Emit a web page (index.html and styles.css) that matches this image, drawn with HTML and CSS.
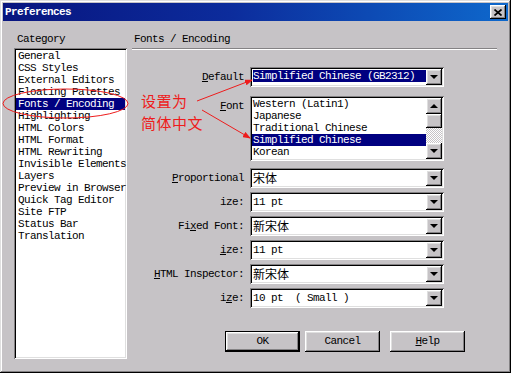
FILE: index.html
```html
<!DOCTYPE html>
<html>
<head>
  <title>Preferences</title>
  <link rel="stylesheet" href="styles.css">
</head>
<body>
  <div class="window">
    <div class="titlebar">
      <span class="title">Preferences</span>
      <span class="close raised">
        <svg width="8" height="7" viewBox="0 0 8 7"><path d="M0.5 0.5L7.5 6.5M7.5 0.5L0.5 6.5" stroke="#000" stroke-width="1.7"/></svg>
      </span>
    </div>

    <div class="main">
      <div class="category">
        <div class="caption">Category</div>
        <div class="list sunken">
          <div class="item">General</div>
          <div class="item">CSS Styles</div>
          <div class="item">External Editors</div>
          <div class="item">Floating Palettes</div>
          <div class="item selected">Fonts / Encoding</div>
          <div class="item">Highlighting</div>
          <div class="item">HTML Colors</div>
          <div class="item">HTML Format</div>
          <div class="item">HTML Rewriting</div>
          <div class="item">Invisible Elements</div>
          <div class="item">Layers</div>
          <div class="item">Preview in Browser</div>
          <div class="item">Quick Tag Editor</div>
          <div class="item">Site FTP</div>
          <div class="item">Status Bar</div>
          <div class="item">Translation</div>
        </div>
      </div>

      <div class="panel">
        <div class="heading">Fonts / Encoding</div>
        <div class="rule"></div>

        <div class="form">
          <div class="row">
            <div class="label"><span><u>D</u>efault</span></div>
            <div class="select sunken">
              <span class="value"><span class="picked">Simplified Chinese (GB2312)</span></span>
              <span class="drop raised"></span>
            </div>
          </div>

          <div class="row tall">
            <div class="label"><span><u>F</u>ont</span></div>
            <div class="listbox sunken">
              <div class="options">
                <div class="opt">Western (Latin1)</div>
                <div class="opt">Japanese</div>
                <div class="opt">Traditional Chinese</div>
                <div class="opt selected">Simplified Chinese</div>
                <div class="opt">Korean</div>
              </div>
              <div class="scrollbar">
                <span class="arrow up raised"></span>
                <span class="thumb raised"></span>
                <span class="track"></span>
                <span class="arrow down raised"></span>
              </div>
            </div>
          </div>

          <div class="row after-tall">
            <div class="label"><span><u>P</u>roportional</span></div>
            <div class="select sunken">
              <span class="value"><span class="cjk">宋体</span></span>
              <span class="drop raised"></span>
            </div>
          </div>

          <div class="row">
            <div class="label"><span>ize:</span></div>
            <div class="select sunken">
              <span class="value">11 pt</span>
              <span class="drop raised"></span>
            </div>
          </div>

          <div class="row">
            <div class="label"><span>Fi<u>x</u>ed Font:</span></div>
            <div class="select sunken">
              <span class="value"><span class="cjk">新宋体</span></span>
              <span class="drop raised"></span>
            </div>
          </div>

          <div class="row">
            <div class="label"><span><u>i</u>ze:</span></div>
            <div class="select sunken">
              <span class="value">11 pt</span>
              <span class="drop raised"></span>
            </div>
          </div>

          <div class="row">
            <div class="label"><span><u>H</u>TML Inspector:</span></div>
            <div class="select sunken">
              <span class="value"><span class="cjk">新宋体</span></span>
              <span class="drop raised"></span>
            </div>
          </div>

          <div class="row">
            <div class="label"><span>i<u>z</u>e:</span></div>
            <div class="select sunken">
              <span class="value">10 pt  ( Small )</span>
              <span class="drop raised"></span>
            </div>
          </div>
        </div>

        <div class="buttons">
          <span class="btn raised default">OK</span>
          <span class="btn raised cancel">Cancel</span>
          <span class="btn raised help"><u>H</u>elp</span>
        </div>
      </div>
    </div>

    <!-- red hand-drawn notes on top of the dialog -->
    <svg class="marks" width="511" height="373">
      <defs>
        <marker id="head" markerWidth="8" markerHeight="6" refX="7" refY="3" orient="auto" markerUnits="userSpaceOnUse">
          <path d="M0 0L8 3L0 6z" fill="#ee1c1c"/>
        </marker>
      </defs>
      <ellipse cx="65.5" cy="103.5" rx="62.5" ry="14.5" fill="none" stroke="#ee1c1c"/>
      <line x1="197" y1="101" x2="252" y2="80" stroke="#ee1c1c" marker-end="url(#head)"/>
      <line x1="202" y1="110" x2="250" y2="138" stroke="#ee1c1c" marker-end="url(#head)"/>
    </svg>
    <div class="note">设置为<br>简体中文</div>
  </div>
</body>
</html>
```

FILE: styles.css
```css
* { box-sizing: border-box; }

body {
  margin: 0;
  background: #c6c3c6;
  font-family: "Liberation Mono", "Noto Sans CJK SC", monospace;
  font-size: 11px;
  letter-spacing: -0.6px;
  color: #000;
}

u { text-decoration: underline; text-underline-offset: 1px; }

.cjk {
  font-family: "Noto Sans CJK SC", sans-serif;
  font-size: 12px;
  letter-spacing: 0;
}

/* bevels */
.raised {
  background: #c6c3c6;
  box-shadow: inset -1px -1px #000, inset 1px 1px #fff, inset -2px -2px #848284, inset 2px 2px #dfdfdf;
}
.sunken {
  background: #fff;
  box-shadow: inset 1px 1px #848284, inset -1px -1px #fff, inset 2px 2px #000, inset -2px -2px #dfdfdf;
}

.window {
  position: relative;
  width: 511px;
  height: 373px;
  padding: 3px;
  background: #c6c3c6;
  box-shadow: inset -1px -1px #000, inset 1px 1px #dfdfdf, inset -2px -2px #848284, inset 2px 2px #fff;
}

.titlebar {
  display: flex;
  align-items: center;
  justify-content: space-between;
  height: 18px;
  padding: 0 2px;
  background: linear-gradient(to right, #08157f, #0c2c9c 45%, #0e68cc);
  color: #fff;
  font-weight: bold;
  line-height: 18px;
}

.close {
  display: flex;
  align-items: center;
  justify-content: center;
  width: 16px;
  height: 14px;
}

.main {
  display: flex;
  gap: 5px;
  padding: 12px 0 0 11px;
}

.category { width: 113px; }

.caption {
  line-height: 12px;
  padding-left: 3px;
}

.list {
  margin-top: 3px;
  height: 311px;
  padding: 2px;
}

.item {
  line-height: 12px;
  padding-left: 2px;
  white-space: nowrap;
}

.selected {
  background: #000080;
  color: #fff;
}

.panel { width: 365px; }

.heading {
  line-height: 12px;
  padding-left: 2px;
}

.rule {
  margin-top: 3px;
  height: 2px;
  border-top: 1px solid #848284;
  border-bottom: 1px solid #fff;
}

.form { margin-top: 17px; }

.row {
  display: flex;
  gap: 6px;
}
.row + .row { margin-top: 4px; }
.row.tall { margin-top: 9px; }
.row.after-tall { margin-top: 7px; }

.label {
  width: 112px;
  text-align: right;
  line-height: 20px;
  white-space: nowrap;
}

.select {
  display: flex;
  width: 194px;
  height: 20px;
  padding: 2px;
}

.value {
  flex: 1;
  line-height: 16px;
  padding-left: 1px;
  white-space: pre;
}

.picked {
  display: block;
  margin-top: 1px;
  line-height: 12px;
  background: #000080;
  color: #fff;
}

.drop, .arrow {
  display: flex;
  align-items: center;
  justify-content: center;
  width: 16px;
  height: 16px;
}
.drop::after, .arrow.down::after {
  content: "";
  border-top: 4px solid #000;
  border-left: 4px solid transparent;
  border-right: 4px solid transparent;
}
.arrow.up::after {
  content: "";
  border-bottom: 4px solid #000;
  border-left: 4px solid transparent;
  border-right: 4px solid transparent;
}

.listbox {
  display: flex;
  width: 194px;
  height: 65px;
  padding: 2px;
}

.options { flex: 1; }

.opt {
  line-height: 12px;
  padding-left: 1px;
  white-space: nowrap;
}

.scrollbar {
  display: flex;
  flex-direction: column;
  width: 16px;
}
.thumb { height: 14px; }
.track {
  flex: 1;
  background: repeating-conic-gradient(#fff 0 25%, #c6c3c6 0 50%) 0 0 / 2px 2px;
}

.buttons {
  display: flex;
  margin-top: 23px;
  padding-left: 93px;
}

.btn {
  width: 75px;
  height: 21px;
  line-height: 21px;
  text-align: center;
}
.btn.default { border: 1px solid #000; line-height: 19px; }
.btn.cancel { margin-left: 5px; }
.btn.help { margin-left: 10px; }

.marks {
  position: absolute;
  left: 0;
  top: 0;
  pointer-events: none;
}

.note {
  position: absolute;
  left: 141px;
  top: 90px;
  font-family: "Noto Sans CJK SC", sans-serif;
  font-size: 15px;
  line-height: 22px;
  letter-spacing: 0.5px;
  color: #ee1c1c;
}
```
